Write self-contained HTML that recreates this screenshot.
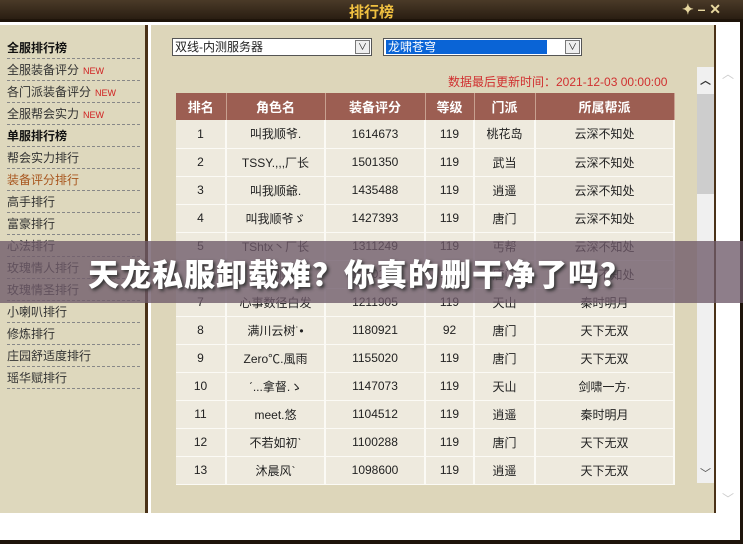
<!DOCTYPE html>
<html><head><meta charset="utf-8"><style>
*{margin:0;padding:0;box-sizing:border-box}
body{width:743px;height:544px;overflow:hidden;position:relative;background:#fff;font-family:"Liberation Sans","Noto Sans CJK SC",sans-serif;font-size:12px;color:#222}
.title{position:absolute;left:0;top:0;width:743px;height:22px;background:linear-gradient(#4a3a28,#2a1e12);border-bottom:3px solid #1e140a}
.title .t{position:absolute;left:0;width:743px;text-align:center;top:1px;color:#f0c040;font-size:15px;font-weight:bold}
.title .c{position:absolute;right:22px;top:1px;color:#e8d8a0;font-size:14px;font-weight:bold}
.left{position:absolute;left:0;top:25px;width:148px;height:488px;background:#ded8bd;border-right:3px solid #4a3218}
.main{position:absolute;left:151px;top:25px;width:565px;height:488px;background:#ddd6ba;border-right:2px solid #4a3218}
.right{position:absolute;left:717px;top:25px;width:23px;height:515px;background:#fff}
.bottom{position:absolute;left:0;top:513px;width:717px;height:27px;background:#fff}
.frame{position:absolute;left:0;top:540px;width:743px;height:4px;background:#1e140a}
.rb{position:absolute;left:740px;top:22px;width:3px;height:522px;background:#1e140a}
.mi{position:absolute;left:7px;width:133px;height:22px;line-height:22px;border-bottom:1px dashed #888;color:#333;font-size:12px}
.mi b{font-weight:bold;color:#111}
.new{color:#d02020;font-size:9px;margin-left:4px}
.sel{position:absolute;top:38px;height:18px;border:1px solid #555;background:#fff;font-size:12px;line-height:16px;padding-left:2px}
.sel .ar{position:absolute;right:1px;top:1px;width:15px;height:14px;border:1px solid #777;background:#eee;font-size:9px;text-align:center;line-height:13px}
table{position:absolute;left:176px;top:93px;width:499px;border-collapse:collapse}
th{background:#9c5e52;color:#fff;height:27px;font-size:13px;border-right:1px solid #c8a090}
td{background:#eeeade;height:28px;text-align:center;font-size:12px;color:#222;border-right:2px solid #fbfaf5;border-bottom:1px solid #fbfaf5}
.sb{position:absolute;left:697px;top:67px;width:17px;height:416px;background:#f0f0f0}
.band{position:absolute;left:0;top:241px;width:743px;height:62px;background:rgba(110,90,105,.78)}
.band div{position:absolute;left:88px;top:9px;font-size:31px;font-weight:900;color:#fff;letter-spacing:1px;text-shadow:2px 2px 3px #333;font-family:"Noto Sans CJK SC",sans-serif}
</style></head><body>
<div class="title"><div class="t">排行榜</div><div class="c">✦ – ✕</div></div>
<div class="left">
<div class="mi" style="top:12px"><b>全服排行榜</b></div>
<div class="mi" style="top:34px">全服装备评分<span class="new">NEW</span></div>
<div class="mi" style="top:56px">各门派装备评分<span class="new">NEW</span></div>
<div class="mi" style="top:78px">全服帮会实力<span class="new">NEW</span></div>
<div class="mi" style="top:100px"><b>单服排行榜</b></div>
<div class="mi" style="top:122px">帮会实力排行</div>
<div class="mi" style="top:144px;color:#a8561e">装备评分排行</div>
<div class="mi" style="top:166px">高手排行</div>
<div class="mi" style="top:188px">富豪排行</div>
<div class="mi" style="top:210px">心法排行</div>
<div class="mi" style="top:232px">玫瑰情人排行</div>
<div class="mi" style="top:254px">玫瑰情圣排行</div>
<div class="mi" style="top:276px">小喇叭排行</div>
<div class="mi" style="top:298px">修炼排行</div>
<div class="mi" style="top:320px">庄园舒适度排行</div>
<div class="mi" style="top:342px">瑶华赋排行</div>
</div>
<div class="main"></div>
<div class="right"><div style="position:absolute;left:5px;top:40px;color:#ccc;font-size:12px">︿</div><div style="position:absolute;left:5px;top:465px;color:#ccc;font-size:12px">﹀</div></div>
<div class="bottom"></div>
<div class="frame"></div><div class="rb"></div>
<div class="sel" style="left:172px;width:200px">双线-内测服务器<div class="ar">∨</div></div>
<div class="sel" style="left:383px;width:199px"><div style="position:absolute;left:2px;top:1px;width:161px;height:14px;background:#0a64d6;color:#fff;line-height:14px;padding-left:2px">龙啸苍穹</div><div class="ar">∨</div></div>
<div style="position:absolute;left:448px;top:73px;color:#d03030;font-size:12px">数据最后更新时间：2021-12-03 00:00:00</div>
<table>
<tr><th style="width:50px">排名</th><th style="width:99px">角色名</th><th style="width:100px">装备评分</th><th style="width:49px">等级</th><th style="width:61px">门派</th><th>所属帮派</th></tr>
<tr><td>1</td><td>叫我顺爷.</td><td>1614673</td><td>119</td><td>桃花岛</td><td>云深不知处</td></tr>
<tr><td>2</td><td>TSSY.,,,厂长</td><td>1501350</td><td>119</td><td>武当</td><td>云深不知处</td></tr>
<tr><td>3</td><td>叫我顺爺.</td><td>1435488</td><td>119</td><td>逍遥</td><td>云深不知处</td></tr>
<tr><td>4</td><td>叫我顺爷ゞ</td><td>1427393</td><td>119</td><td>唐门</td><td>云深不知处</td></tr>
<tr><td>5</td><td>TShtx丶厂长</td><td>1311249</td><td>119</td><td>丐帮</td><td>云深不知处</td></tr>
<tr><td>6</td><td>叫我顺爷</td><td>1240176</td><td>119</td><td>唐门</td><td>云深不知处</td></tr>
<tr><td>7</td><td>心事数径白发</td><td>1211905</td><td>119</td><td>天山</td><td>秦时明月</td></tr>
<tr><td>8</td><td>满川云树˙•</td><td>1180921</td><td>92</td><td>唐门</td><td>天下无双</td></tr>
<tr><td>9</td><td>Zero℃.風雨</td><td>1155020</td><td>119</td><td>唐门</td><td>天下无双</td></tr>
<tr><td>10</td><td>ˊ...拿督.ゝ</td><td>1147073</td><td>119</td><td>天山</td><td>剑啸一方·</td></tr>
<tr><td>11</td><td>meet.悠</td><td>1104512</td><td>119</td><td>逍遥</td><td>秦时明月</td></tr>
<tr><td>12</td><td>不若如初ˋ</td><td>1100288</td><td>119</td><td>唐门</td><td>天下无双</td></tr>
<tr><td>13</td><td>沐晨风`</td><td>1098600</td><td>119</td><td>逍遥</td><td>天下无双</td></tr>
</table>
<div class="sb"><div style="position:absolute;left:0;top:27px;width:17px;height:100px;background:#cdcdcd"></div><div style="position:absolute;left:3px;top:5px;font-size:11px;color:#333;font-weight:bold">︿</div><div style="position:absolute;left:3px;top:398px;font-size:11px;color:#555">﹀</div></div>
<div class="band"><div>天龙私服卸载难？你真的删干净了吗？</div></div>
</body></html>
